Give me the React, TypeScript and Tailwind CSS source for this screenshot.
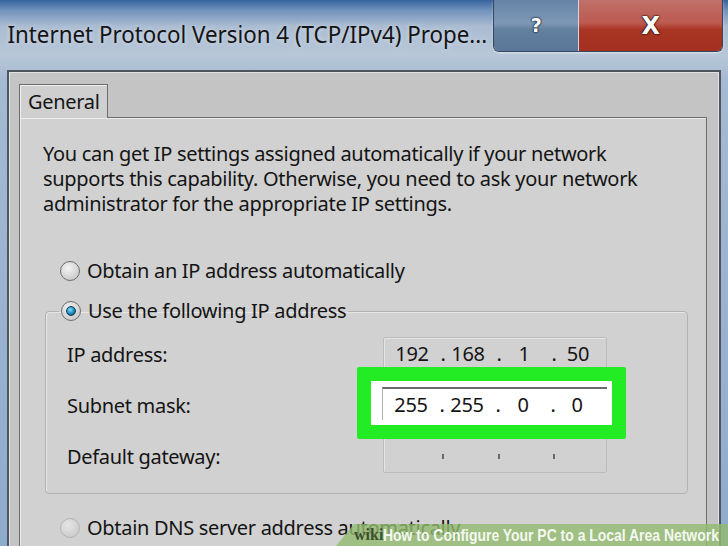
import React from "react";

const Radio = ({ checked, dim }: { checked?: boolean; dim?: boolean }) => (
  <span
    className={
      "relative inline-flex w-[20px] h-[20px] rounded-full border items-center justify-center shrink-0 " +
      (dim
        ? "border-[#b4b4b4] bg-[radial-gradient(circle_at_40%_35%,#e6e6e6,#c4c4c4)]"
        : "border-[#6e6e6e] bg-[radial-gradient(circle_at_40%_35%,#f4f4f4,#bdbdbd)]")
    }
  >
    {checked && (
      <span className="w-[10px] h-[10px] rounded-full bg-[radial-gradient(circle_at_40%_35%,#7fe0ff,#1b86b8_55%,#0b3f66)] border border-[#143a55]" />
    )}
  </span>
);

const Octets = ({ v, kind }: { v: string[]; kind: "dot" | "tick" }) => {
  const widths = ["w-[48px]", "w-[14px]", "w-[36px]", "w-[26px]", "w-[24px]", "w-[36px]", "w-[12px]"];
  const cells: React.ReactNode[] = [];
  for (let i = 0; i < 7; i++) {
    const isOct = i % 2 === 0;
    cells.push(
      <div key={i} className={widths[i] + " flex justify-center items-center whitespace-nowrap"}>
        {isOct ? (
          v[i / 2]
        ) : kind === "dot" ? (
          <span className="text-[20px]">.</span>
        ) : (
          <span className="w-[2px] h-[5px] bg-[#6a6a6a] mt-[2px]" />
        )}
      </div>
    );
  }
  return <div className="flex pl-[4px] h-full items-center">{cells}</div>;
};

export default function App() {
  return (
    <div className="relative w-[728px] h-[546px] overflow-hidden font-['Noto_Sans',sans-serif] text-[#141414] tracking-[-0.3px] bg-[linear-gradient(to_bottom,#3763a0_0px,#6f91bb_10px,#aabcd2_26px,#b8c7d8_55px,#a5bad3_80px,#8fabcb_100%)]">
      {/* Title bar */}
      <div className="flex h-[70px] items-start">
        <div className="w-[484px] shrink-0 pl-[8px] pt-[19px] text-[24px] leading-[30px] tracking-normal whitespace-nowrap origin-left scale-x-[0.93] [text-shadow:0_0_6px_rgba(255,255,255,0.55)]">
          Internet Protocol Version 4 (TCP/IPv4) Prope...
        </div>
        <div className="ml-auto mr-[5px] shrink-0 flex h-[52px] rounded-b-[6px] border border-t-0 border-[#34465e] overflow-hidden shadow-[0_1px_2px_rgba(255,255,255,0.6)]">
          <div className="w-[85px] flex items-center justify-center bg-[linear-gradient(to_bottom,#6683a6_0%,#7e98b6_45%,#64809f_58%,#5a7698_100%)] border-r border-[#d0d8e2] font-['DejaVu_Sans',sans-serif] font-bold text-[19px] text-white [text-shadow:0_0_1px_#1d2633,0_0_2px_#1d2633,0_0_2px_#1d2633]">
            ?
          </div>
          <div className="w-[143px] flex items-center justify-center bg-[linear-gradient(to_bottom,#c0706a_0%,#bc5a50_45%,#a93525_58%,#a32f20_100%)] font-['DejaVu_Sans',sans-serif] font-bold text-[24px] text-white [text-shadow:0_0_1px_#2a1410,0_0_2px_#2a1410,0_0_2px_#2a1410]">
            X
          </div>
        </div>
      </div>

      {/* Outer dialog frame */}
      <div className="mx-[7px] h-[500px] border-2 border-[#50565d] bg-[#c4c4c4] pl-[10px] pr-[12px] pt-[12px] shadow-[inset_0_0_0_1px_#e2e2e2]">
        {/* Tab */}
        <div className="flex">
          <div className="w-[89px] h-[34px] border border-b-0 border-[#6c6c6c] bg-[#cfcfcf] pl-[8px] text-[20px] leading-[34px] relative z-10 -mb-px shadow-[inset_1px_1px_0_#f0f0f0]">
            General
          </div>
        </div>
        {/* Content */}
        <div className="h-[440px] border border-[#6c6c6c] bg-[#d1d1d1] pl-[23px] pt-[23px] shadow-[inset_1px_1px_0_#ececec]">
          <p className="text-[20px] leading-[25px] whitespace-nowrap">
            You can get IP settings assigned automatically if your network
            <br />
            supports this capability. Otherwise, you need to ask your network
            <br />
            administrator for the appropriate IP settings.
          </p>

          <div className="flex items-center gap-[7px] pl-[17px] mt-[42px] h-[26px] text-[20px]">
            <Radio />
            <span>Obtain an IP address automatically</span>
          </div>

          <fieldset className="mt-[14px] ml-[2px] w-[643px] h-[196px] border border-[#b2b2b2] rounded-[4px] shadow-[inset_1px_1px_0_#e6e6e6] px-0">
            <legend className="ml-[13px] px-[2px] flex items-center gap-[7px] text-[20px] h-[26px]">
              <Radio checked />
              <span>Use the following IP address</span>
            </legend>
            <div className="flex items-start mt-[5px]">
              <div className="w-[337px] pl-[21px] flex flex-col text-[20px]">
                <div className="h-[51px] flex items-center">IP address:</div>
                <div className="h-[51px] flex items-center">Subnet mask:</div>
                <div className="h-[51px] flex items-center">Default gateway:</div>
              </div>
              <div className="relative mt-[8px] w-[224px] h-[136px] border border-[#bcbcbc] rounded-[2px] text-[20px] shadow-[inset_1px_1px_0_#e4e4e4]">
                <div className="h-[32px]">
                  <Octets v={["192", "168", "1", "50"]} kind="dot" />
                </div>
                <div className="h-[68px]" />
                <div className="h-[34px]">
                  <Octets v={["", "", "", ""]} kind="tick" />
                </div>
                {/* green highlight annotation */}
                <div className="absolute left-[-27px] top-[29px] w-[269px] h-[72px] bg-[#24ec24] p-[14px] rounded-[2px]">
                  <div className="w-full h-full bg-white pl-[11px] pt-[6px] pr-[5px]">
                    <div className="h-[33px] border-t-2 border-l border-[#6d6d6d] border-l-[#b0b0b0] text-[20px]">
                      <Octets v={["255", "255", "0", "0"]} kind="dot" />
                    </div>
                  </div>
                </div>
              </div>
            </div>
          </fieldset>

          <div className="flex items-center gap-[7px] pl-[17px] mt-[21px] h-[26px] text-[20px]">
            <Radio dim />
            <span>Obtain DNS server address automatically</span>
          </div>
        </div>
      </div>

      {/* wikiHow watermark */}
      <div className="absolute left-[336px] bottom-0 w-[392px] h-[22px] bg-[rgba(146,186,112,0.8)] [clip-path:polygon(18px_0,100%_0,100%_100%,0_100%)] flex items-center pl-[18px] whitespace-nowrap tracking-normal">
        <span className="font-['Liberation_Serif',serif] font-bold text-[16px] text-[#3d4f2d] leading-none">wiki</span>
        <span className="font-['Liberation_Sans',sans-serif] font-bold text-[17px] text-[#f4f8ef] leading-none origin-left scale-x-[0.82] inline-block">
          How to Configure Your PC to a Local Area Network
        </span>
      </div>
    </div>
  );
}
